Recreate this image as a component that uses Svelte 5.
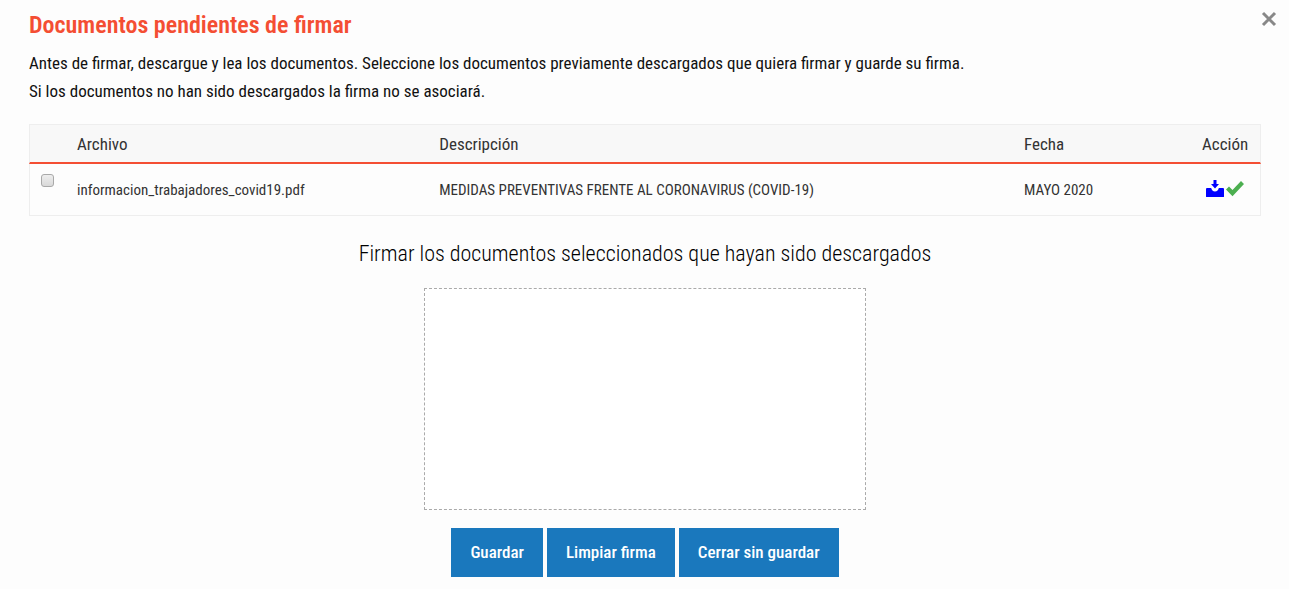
<script>
  const rows = [{ file: 'informacion_trabajadores_covid19.pdf', text: 'MEDIDAS PREVENTIVAS FRENTE AL CORONAVIRUS (COVID-19)', date: 'MAYO 2020' }];
</script>

<main>
  <button class="close" aria-label="Cerrar"><svg width="16" height="16" viewBox="0 0 16 16"><path d="M2 2 14 14M14 2 2 14" /></svg></button>
  <h1>Documentos pendientes de firmar</h1>
  <p>Antes de firmar, descargue y lea los documentos. Seleccione los documentos previamente descargados que quiera firmar y guarde su firma.<br />Si los documentos no han sido descargados la firma no se asociará.</p>
  <table>
    <thead>
      <tr><th class="check"></th><th class="file">Archivo</th><th class="text">Descripción</th><th class="date">Fecha</th><th class="action">Acción</th></tr>
    </thead>
    <tbody>
      {#each rows as row}
        <tr>
          <td class="check"><input type="checkbox" aria-label={row.file} /></td>
          <td>{row.file}</td>
          <td>{row.text}</td>
          <td>{row.date}</td>
          <td class="action">
            <div class="icons">
              <a href="#descargar" aria-label="Descargar"><svg width="18" height="18" viewBox="0 0 18 18"><path fill="#00f" d="M7.500 0h3v4H13L9 8.500 5 4h2.500zM1 8h4.200c.3 2 1.800 3.400 3.800 3.400s3.500-1.400 3.800-3.400H17q1 0 1 1v7.500q0 .5-.5.500H.5q-.5 0-.5-.5V9q0-1 1-1z" /></svg></a>
              <svg width="18" height="18" viewBox="0 0 18 18"><path fill="#4caf50" d="M0 9.500 3 6.500 6.500 10 15 1 18 4 6.500 16.200z" /></svg>
            </div>
          </td>
        </tr>
      {/each}
    </tbody>
  </table>
  <section>
    <h2>Firmar los documentos seleccionados que hayan sido descargados</h2>
    <canvas width="440" height="220"></canvas>
    <div class="buttons">
      <button>Guardar</button><button>Limpiar firma</button><button>Cerrar sin guardar</button>
    </div>
  </section>
</main>

<style>
  :global(body) { margin: 0; background: #fdfdfd; }
  main { position: relative; padding: 8px 28px 12px 29px; font-family: 'Roboto Condensed', Roboto, sans-serif; color: #111; }
  h1 { margin: 0 0 7px; font-size: 24px; line-height: 34px; color: #f44e33; font-weight: 600; }
  p { margin: 0 0 19px; font-size: 17px; line-height: 28px; font-weight: 400; }
  table { width: 100%; table-layout: fixed; border-collapse: separate; border-spacing: 0; border: 1px solid #eee; border-width: 1px 0; }
  th, td { box-sizing: border-box; text-align: left; font-weight: 400; padding: 0 12px; color: #333; }
  th { height: 39px; font-size: 17px; background: #f8f8f8; border-bottom: 2px solid #f44e33; }
  td { height: 51px; font-size: 15px; }
  tr > :first-child { border-left: 1px solid #eee; }
  tr > :last-child { border-right: 1px solid #eee; }
  .check { width: 36px; padding: 0 0 0 11px; }
  td.check { vertical-align: top; }
  .file { width: 29.4%; }
  .date { width: 178px; }
  .action { width: 71px; }
  th.action { padding-right: 0; }
  td.action { padding: 0 15px 2px 16px; }
  .icons { display: flex; gap: 2px; }
  svg { display: block; }
  input { appearance: none; display: block; box-sizing: border-box; width: 13px; height: 13px; margin: 10px 0 0; border: 1px solid #a9a9a9; border-radius: 3px; background: linear-gradient(#eee, #d9d9d9); }
  input:checked { background: #1a78bd; }
  section { display: flex; flex-direction: column; align-items: center; }
  h2 { margin: 22px 0 18px; font-size: 22px; line-height: 32px; font-weight: 300; color: #000; text-align: center; }
  canvas { max-width: 100%; border: 1px dashed #aaa; background: #fff; }
  .buttons { display: flex; flex-wrap: wrap; gap: 4px; margin-top: 18px; }
  .buttons button { height: 49px; font: 500 17px 'Roboto Condensed', Roboto, sans-serif; color: #fff; background: #1a78bd; border: 0; padding: 0 19px 2px; }
  .close { position: absolute; right: 12px; top: 11px; border: 0; padding: 0; background: none; }
  .close path { stroke: #888; stroke-width: 3; }
</style>
